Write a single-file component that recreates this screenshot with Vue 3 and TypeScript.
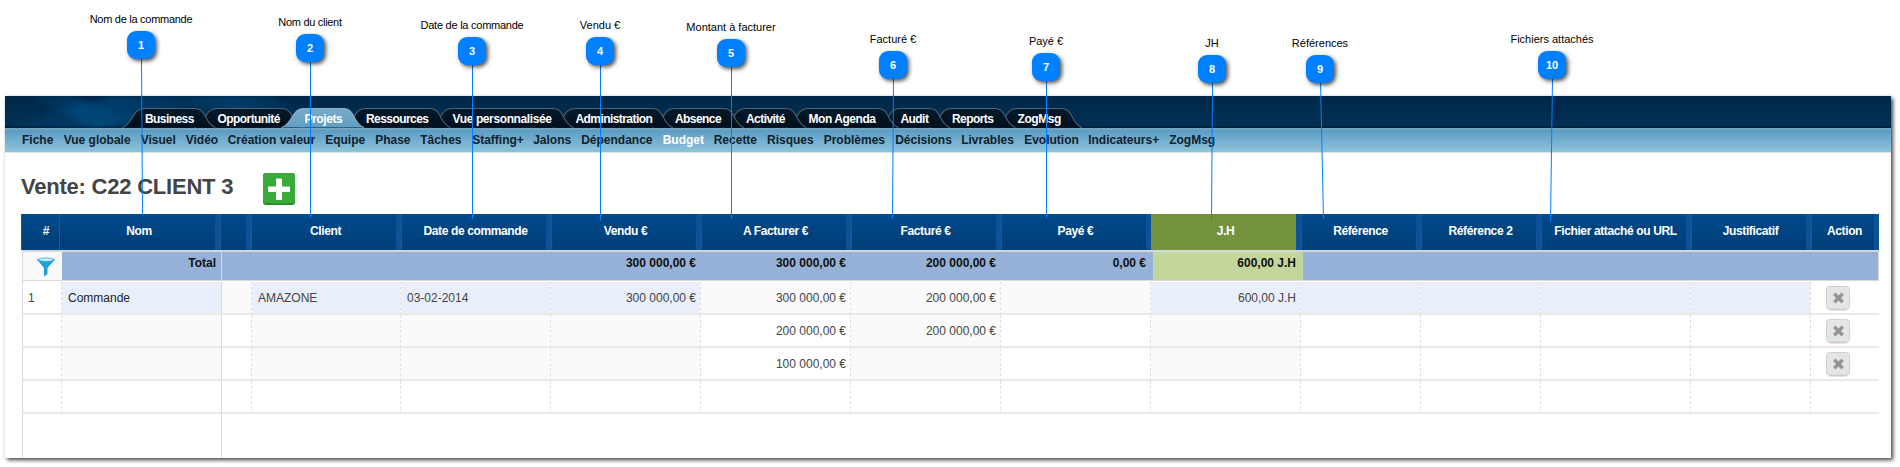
<script setup lang="ts">
interface Callout { n: number; label: string; x: number; y: number; ex: number; ey: number; ls?: number }
interface Tab { label: string; w: number; ls?: number }

const callouts: Callout[] = [
  { n: 1, label: 'Nom de la commande', x: 127, y: 31, ex: 142.5, ey: 215, ls: -0.28 },
  { n: 2, label: 'Nom du client', x: 296, y: 34, ex: 310.5, ey: 218, ls: -0.3 },
  { n: 3, label: 'Date de la commande', x: 458, y: 37, ex: 472.5, ey: 219, ls: -0.25 },
  { n: 4, label: 'Vendu €', x: 586, y: 37, ex: 600.5, ey: 221 },
  { n: 5, label: 'Montant à facturer', x: 717, y: 39, ex: 731.5, ey: 219 },
  { n: 6, label: 'Facturé €', x: 879, y: 51, ex: 892.5, ey: 219 },
  { n: 7, label: 'Payé €', x: 1032, y: 53, ex: 1046.5, ey: 218 },
  { n: 8, label: 'JH', x: 1198, y: 55, ex: 1211.5, ey: 220 },
  { n: 9, label: 'Références', x: 1306, y: 55, ex: 1323.5, ey: 219 },
  { n: 10, label: 'Fichiers attachés', x: 1538, y: 51, ex: 1550.5, ey: 222 },
]

const tabs: Tab[] = [
  { label: 'Business', w: 72.5 },
  { label: 'Opportunité', w: 87 },
  { label: 'Projets', w: 61.5, ls: -0.4 },
  { label: 'Ressources', w: 86.5 },
  { label: 'Vue personnalisée', w: 123, ls: -0.38 },
  { label: 'Administration', w: 99.5 },
  { label: 'Absence', w: 71 },
  { label: 'Activité', w: 62.5 },
  { label: 'Mon Agenda', w: 92, ls: -0.45 },
  { label: 'Audit', w: 51.5 },
  { label: 'Reports', w: 65.5 },
  { label: 'ZogMsg', w: 66.5, ls: -0.45 },
]
const activeTab = 2

const shapes = tabs.map((t, i) => {
  const start = tabs.slice(0, i).reduce((s, p) => s + p.w, 140)
  const l = start - 23
  const r = start + t.w - 2
  const d = `M${l} 31.5 C${l + 11} 29 ${l + 10} 12.5 ${l + 22} 12.5 H${r - 20} C${r - 9} 12.5 ${r - 11} 28 ${r} 31.5`
  return { d, active: i === activeTab }
})
const drawOrder = [...shapes].reverse().sort((a, b) => Number(a.active) - Number(b.active))

const links: Tab[] = [
  { label: 'Fiche', w: 41.7 },
  { label: 'Vue globale', w: 77 },
  { label: 'Visuel', w: 45 },
  { label: 'Vidéo', w: 42 },
  { label: 'Création valeur', w: 97.5 },
  { label: 'Equipe', w: 50 },
  { label: 'Phase', w: 45 },
  { label: 'Tâches', w: 52 },
  { label: 'Staffing+', w: 61 },
  { label: 'Jalons', w: 48 },
  { label: 'Dépendance', w: 81.5 },
  { label: 'Budget', w: 51 },
  { label: 'Recette', w: 53.3 },
  { label: 'Risques', w: 56.7 },
  { label: 'Problèmes', w: 71.5 },
  { label: 'Décisions', w: 66 },
  { label: 'Livrables', w: 63 },
  { label: 'Evolution', w: 64 },
  { label: 'Indicateurs+', w: 81 },
  { label: 'ZogMsg', w: 50 },
]

const headers = ['#', 'Nom', '', 'Client', 'Date de commande', 'Vendu €', 'A Facturer €', 'Facturé €', 'Payé €', 'J.H', 'Référence', 'Référence 2', 'Fichier attaché ou URL', 'Justificatif', 'Action']

const totals = ['', '', '', '300 000,00 €', '300 000,00 €', '200 000,00 €', '0,00 €', '600,00 J.H', '', '', '', '', '']

/* tone of each cell: b = pale blue, g = pale gray, w = white */
const rows = [
  { tones: 'wbgbbbgggbbbbbw', cells: ['1', 'Commande', '', 'AMAZONE', '03-02-2014', '300 000,00 €', '300 000,00 €', '200 000,00 €', '', '600,00 J.H', '', '', '', '', ''], removable: true },
  { tones: 'wgwgggwgwgwwwww', cells: ['', '', '', '', '', '', '200 000,00 €', '200 000,00 €', '', '', '', '', '', '', ''], removable: true },
  { tones: 'wgwgggwgwgwwwww', cells: ['', '', '', '', '', '', '100 000,00 €', '', '', '', '', '', '', '', ''], removable: true },
  { tones: 'wwwwwwwwwwwwwww', cells: ['', '', '', '', '', '', '', '', '', '', '', '', '', '', ''], removable: false },
]
</script>

<template>
  <div class="page">
    <main class="panel">
      <header class="top">
        <svg class="decor" width="1886" height="32" viewBox="0 0 1886 32">
          <defs>
            <linearGradient id="glow" x1="0" x2="1" y1="0" y2="0">
              <stop offset="0" stop-color="#0a5490" stop-opacity="0" />
              <stop offset=".45" stop-color="#0a5490" stop-opacity=".45" />
              <stop offset="1" stop-color="#0a5490" stop-opacity="0" />
            </linearGradient>
            <linearGradient id="active" x1="0" x2="0" y1="0" y2="1">
              <stop offset="0" stop-color="#79aac7" />
              <stop offset="1" stop-color="#5f9fc5" />
            </linearGradient>
            <linearGradient id="dark" x1="0" x2="0" y1="0" y2="1">
              <stop offset="0" stop-color="#051a2b" />
              <stop offset="1" stop-color="#010f1d" />
            </linearGradient>
            <filter id="soft" x="-10%" y="-30%" width="120%" height="160%"><feGaussianBlur stdDeviation="2" /></filter>
          </defs>
          <g filter="url(#soft)">
            <path d="M20 0H65L150 32H90Z" fill="url(#glow)" />
            <path d="M10 24L110 0H240L90 32H0Z" fill="url(#glow)" />
            <path d="M170 0H265L300 16H200Z" fill="url(#glow)" />
          </g>
          <path
            v-for="(s, i) in drawOrder"
            :key="i"
            :d="s.d"
            :fill="s.active ? 'url(#active)' : 'url(#dark)'"
            :stroke="s.active ? '#8bb2c9' : '#4e6272'"
            stroke-width="1.1"
          />
        </svg>
        <nav class="tabs">
          <a
            v-for="t in tabs"
            :key="t.label"
            class="tab"
            :style="{ width: t.w + 'px', letterSpacing: (t.ls ?? -0.57) + 'px' }"
          >{{ t.label }}</a>
        </nav>
      </header>

      <nav class="subnav">
        <a
          v-for="l in links"
          :key="l.label"
          class="link"
          :class="{ current: l.label === 'Budget' }"
          :style="{ width: l.w + 'px' }"
        >{{ l.label }}</a>
      </nav>

      <div class="titlebar">
        <h1>Vente: C22 CLIENT 3</h1>
        <button class="add" type="button">
          <svg width="32" height="32" viewBox="0 0 32 32">
            <rect x="0" y="0" width="32" height="32" rx="3" fill="#2b8f2b" />
            <rect x="0" y="0" width="32" height="30" rx="3" fill="#38ab38" />
            <path d="M13 5.500h6v8h8v5.500h-8v8h-6v-8H5v-5.500h8Z" fill="#fff" />
          </svg>
        </button>
      </div>

      <section class="grid">
        <div class="head">
          <div v-for="(h, i) in headers" :key="i" class="th" :class="{ num: i === 0, green: i === 9 }">{{ h }}</div>
        </div>

        <div class="total">
          <div class="filter">
            <svg width="20" height="20" viewBox="0 0 20 20">
              <path d="M1 2.500L8 11v8.500l3.500-2.500V11L19 2.500Z" fill="#1fa2dc" />
              <ellipse cx="10" cy="2.800" rx="9" ry="2.200" fill="#35b0e6" />
              <ellipse cx="10" cy="2.600" rx="7" ry="1.100" fill="#dff3fb" />
            </svg>
          </div>
          <div class="tcell tname">Total</div>
          <div v-for="(t, i) in totals" :key="i" class="tcell" :class="{ lime: i === 7 }">{{ t }}</div>
        </div>

        <div v-for="(r, ri) in rows" :key="ri" class="row">
          <div
            v-for="(c, i) in r.cells"
            :key="i"
            class="td"
            :class="['tone-' + r.tones[i], { money: i > 4 && i < 10, first: i === 0, name: i === 1, last: i === 14 }]"
          >
            <svg v-if="i === 14 && r.removable" class="remove" width="24" height="25" viewBox="0 0 24 25">
              <rect x="2" y="2" width="20" height="22.500" rx="3" fill="#dcc5bb" />
              <rect x=".5" y=".5" width="23" height="22.500" rx="3" fill="#e5e5e5" stroke="#d0d0d0" />
              <path d="M9.500 9l6 6M15.500 9l-6 6" stroke="#949494" stroke-width="3.400" stroke-linecap="square" />
            </svg>
            <template v-else>{{ c }}</template>
          </div>
        </div>
        <div class="rest"><div class="rest-left"></div></div>
      </section>
    </main>

    <svg class="wires" width="1900" height="467" viewBox="0 0 1900 467">
      <line v-for="c in callouts" :key="c.n" :x1="c.x + 14.5" :y1="c.y + 27" :x2="c.ex" :y2="c.ey" />
    </svg>
    <div v-for="c in callouts" :key="c.n" class="callout" :style="{ left: c.x + 'px', top: c.y + 'px' }">
      <span class="label" :style="{ letterSpacing: (c.ls ?? 0) + 'px' }">{{ c.label }}</span>
      <span class="badge">{{ c.n }}</span>
    </div>
  </div>
</template>

<style>
body { margin: 0; background: #fff; overflow: hidden; }
</style>

<style scoped>
.page {
  position: relative;
  box-sizing: border-box;
  width: 1900px;
  height: 467px;
  padding: 96px 0 0 5px;
  background: #fff;
  font-family: "Liberation Sans", Arial, sans-serif;
  font-size: 12px;
}
.panel {
  width: 1886px;
  height: 362px;
  background: #fff;
  box-shadow: 2px 2px 4px rgba(0, 0, 0, .75);
}
.top {
  position: relative;
  height: 32px;
  background: linear-gradient(#002747, #003055 94%, #00213d 94%);
}
.decor { position: absolute; left: 0; top: 0; }
.tabs { position: relative; display: flex; padding-left: 140px; }
.tab {
  flex: none;
  height: 32px;
  line-height: 47px;
  font-weight: bold;
  color: #fff;
  white-space: nowrap;
}
.subnav {
  display: flex;
  height: 24px;
  padding-left: 17px;
  background: linear-gradient(#74a5be 0, #74a5be 1.5px, #5b9bc4 2px, #8fc4da 24px);
  border-bottom: 1px solid #d5e5ec;
}
.link {
  flex: none;
  line-height: 25px;
  font-weight: bold;
  color: #10222f;
  white-space: nowrap;
}
.link.current { color: #fff; }
.titlebar { display: flex; height: 61px; padding-left: 16px; }
h1 {
  width: 242px;
  margin: 0;
  font-size: 22px;
  line-height: 67px;
  letter-spacing: -.22px;
  color: #444;
  white-space: nowrap;
}
.add { width: 32px; height: 32px; margin: 20px 0 0; padding: 0; border: 0; background: none; }
.add svg { display: block; }
.grid { display: flex; flex-direction: column; width: 1858px; height: 244px; margin-left: 16px; }
.head {
  display: grid;
  grid-template-columns: 38px 161px 31px repeat(7, 150px) 120px 120px 150px 120px 68px;
  height: 36px;
  background: linear-gradient(#00498b, #003e76);
}
.th {
  padding-left: 4px;
  border-right: 5px solid #0f5196;
  box-shadow: inset 1px 0 #1d5a94;
  font-weight: bold;
  line-height: 35px;
  letter-spacing: -.37px;
  text-align: center;
  color: #fff;
  white-space: nowrap;
}
.th.num { padding-left: 12px; border-right: 0; }
.th.green { background: #75933c; background-clip: padding-box; box-shadow: none; }
.total {
  display: grid;
  grid-template-columns: 39px 160px 31px repeat(7, 150px) 120px 120px 150px 120px 1fr;
  height: 28px;
  margin-left: 1px;
  border: 1px solid #d9d9d9;
  border-top: 2px solid #d3d7dc;
}
.filter { background: #fafafa; }
.filter svg { display: block; margin: 5px 0 0 13px; }
.tcell {
  padding-right: 7px;
  background: #95b1d7;
  font-weight: bold;
  line-height: 22px;
  text-align: right;
  color: #111;
  white-space: nowrap;
}
.tname { padding-right: 5px; border-right: 1px solid #d9d9d9; }
.lime { background: #c3d69b; }
.row {
  display: grid;
  grid-template-columns: 39px 160px 30px 149px repeat(6, 150px) 120px 120px 150px 120px 68px;
  height: 33px;
  margin-left: 1px;
  border-left: 1px solid #d9d9d9;
}
.total + .row { padding-top: 1px; }
.td {
  box-sizing: border-box;
  height: 33px;
  padding: 0 5px 0 6px;
  border-right: 1px dashed #e0e0e0;
  border-bottom: 2px solid #e9e9e9;
  background-clip: padding-box;
  line-height: 33px;
  color: #444;
  white-space: nowrap;
}
.first { padding-left: 5px; }
.name { border-right: 1px solid #d9d9d9; color: #222; }
.last { border-right: 0; padding-left: 15px; }
.money { padding-right: 4px; text-align: right; }
.tone-b { background-color: #e9effa; }
.tone-g { background-color: #fafafa; }
.tone-w { background-color: #fff; }
.remove { display: block; margin-top: 4px; }
.rest { flex: 1; margin-left: 1px; border-left: 1px solid #d9d9d9; }
.rest-left { box-sizing: border-box; width: 199px; height: 100%; border-right: 1px solid #d9d9d9; }
.wires { position: absolute; left: 0; top: 0; }
.wires line { stroke: #0080ff; stroke-width: 1; }
.callout { position: absolute; width: 28px; height: 28px; }
.badge {
  display: block;
  width: 28px;
  height: 28px;
  border-radius: 9px;
  background: #0080ff;
  box-shadow: 2px 2px 4px rgba(0, 0, 0, .7);
  font-size: 11px;
  font-weight: bold;
  line-height: 28px;
  text-align: center;
  color: #fff;
}
.label {
  position: absolute;
  left: 50%;
  top: -19px;
  transform: translateX(-50%);
  font-size: 11px;
  line-height: 14px;
  color: #000;
  white-space: nowrap;
}
</style>
